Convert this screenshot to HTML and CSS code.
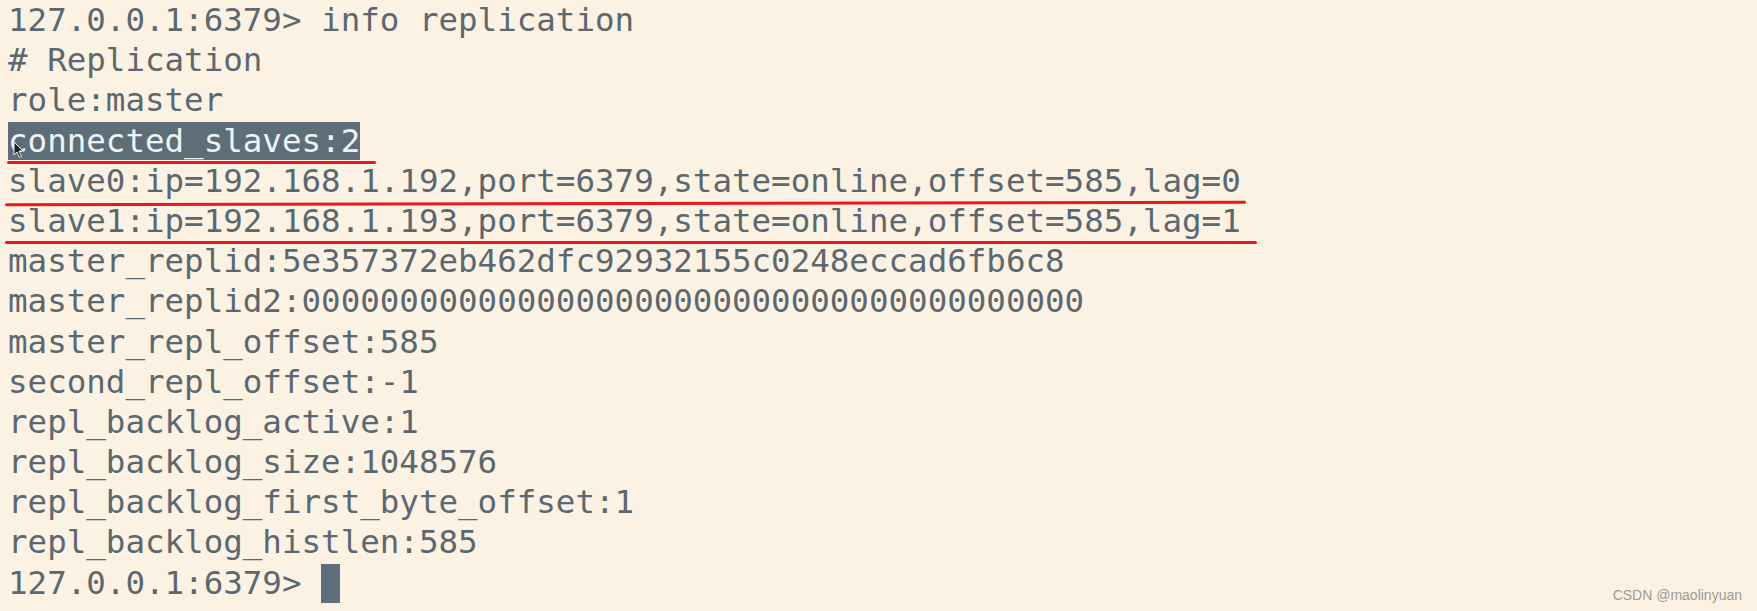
FILE: index.html
```html
<!DOCTYPE html>
<html lang="en">
<head>
<meta charset="utf-8">
<title>info replication</title>
<link rel="stylesheet" href="styles.css">
</head>
<body>
<main class="screen">
<div class="term">
<div class="line">127.0.0.1:6379&gt; info replication</div>
<div class="line"># Replication</div>
<div class="line">role:master</div>
<div class="line"><span class="sel">connected_slaves:2</span></div>
<div class="line">slave0:ip=192.168.1.192,port=6379,state=online,offset=585,lag=0</div>
<div class="line">slave1:ip=192.168.1.193,port=6379,state=online,offset=585,lag=1</div>
<div class="line">master_replid:5e357372eb462dfc92932155c0248eccad6fb6c8</div>
<div class="line">master_replid2:0000000000000000000000000000000000000000</div>
<div class="line">master_repl_offset:585</div>
<div class="line">second_repl_offset:-1</div>
<div class="line">repl_backlog_active:1</div>
<div class="line">repl_backlog_size:1048576</div>
<div class="line">repl_backlog_first_byte_offset:1</div>
<div class="line">repl_backlog_histlen:585</div>
<div class="line prompt">127.0.0.1:6379&gt; <span class="cursor"></span></div>
</div>
<div class="mark mark-1"></div>
<div class="mark mark-2"></div>
<div class="mark mark-3"></div>
<svg class="pointer" width="12" height="18" viewBox="0 0 12 18"><path d="M1 1 L1 14 L4 11 L6.5 16.5 L8.5 15.5 L6 10 L10 10 Z" fill="#1d2329" stroke="#e8edf0" stroke-width="1"/></svg>
<div class="watermark">CSDN @maolinyuan</div>
</main>
</body>
</html>
```
FILE: styles.css
```css
html, body {
  margin: 0;
  padding: 0;
  background: #fcf2e3;
}
.screen {
  position: relative;
  width: 1757px;
  height: 611px;
  overflow: hidden;
  background: #fcf2e3;
}
.term {
  padding: 0 0 0 8px;
  font-family: "DejaVu Sans Mono", "Liberation Mono", monospace;
  font-size: 32.5px;
  line-height: 40.2px;
  color: #5c6870;
}
.line {
  height: 40.2px;
  white-space: pre;
}
.sel {
  background: #5e6e79;
  color: #eef2f3;
}
.prompt {
  display: flex;
  align-items: center;
}
.cursor {
  display: inline-block;
  width: 19px;
  height: 39px;
  margin-top: 1px;
  background: #5e6f7b;
}
.mark {
  position: absolute;
  height: 3px;
  background: #e8161d;
  border-radius: 2px;
}
.mark-1 {
  left: 7px;
  top: 161px;
  width: 369px;
}
.mark-2 {
  left: 5px;
  top: 202px;
  width: 1241px;
  transform: rotate(-0.12deg);
}
.mark-3 {
  left: 5px;
  top: 241px;
  width: 1252px;
}
.pointer {
  position: absolute;
  left: 13px;
  top: 141px;
}
.watermark {
  position: absolute;
  right: 15px;
  bottom: 8px;
  font-family: "Liberation Sans", Arial, sans-serif;
  font-size: 14px;
  color: #9c9a97;
}
```
